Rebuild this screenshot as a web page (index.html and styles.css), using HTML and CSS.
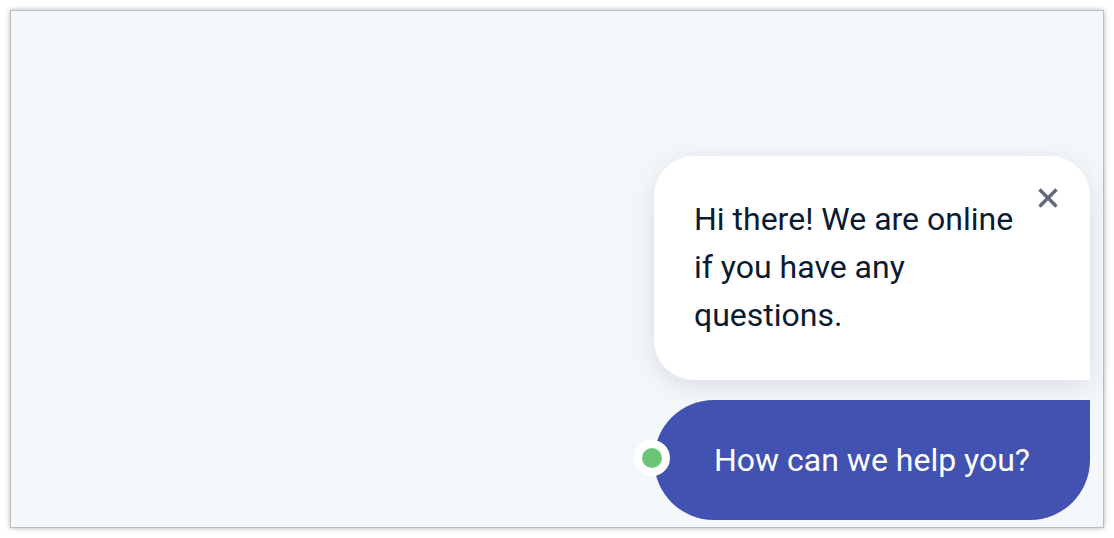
FILE: index.html
```html
<!DOCTYPE html>
<html lang="en">
<head>
<meta charset="utf-8">
<title>Chat widget</title>
<link rel="stylesheet" href="styles.css">
</head>
<body>
<div class="frame">
  <div class="widget">
    <div class="card">
      <p class="message">Hi there! We are online if you have any questions.</p>
      <button class="close" aria-label="Close">
        <svg width="22" height="22" viewBox="0 0 22 22"><path d="M2.5 2.5 L19.5 19.5 M19.5 2.5 L2.5 19.5" stroke="#5f6b78" stroke-width="3.4" stroke-linecap="butt"/></svg>
      </button>
    </div>
    <div class="launcher">
      <span class="status"></span>
      <span class="launcher-text">How can we help you?</span>
    </div>
  </div>
</div>
</body>
</html>
```
FILE: styles.css
```css
* { box-sizing: border-box; }
html, body { margin: 0; padding: 0; background: #ffffff; }
body { padding: 10px; font-family: Roboto, "Liberation Sans", sans-serif; }
.frame {
  width: 1094px;
  height: 518px;
  background: #f5f8fb;
  border: 1px solid #bdbdbd;
  box-shadow: 0 0 5px rgba(0,0,0,0.3);
  display: flex;
  flex-direction: column;
  justify-content: flex-end;
  align-items: flex-end;
  padding: 0 13px 7px 0;
}
.widget {
  display: flex;
  flex-direction: column;
  gap: 20px;
  width: 436px;
}
.card {
  position: relative;
  background: #ffffff;
  border-radius: 40px 40px 0 40px;
  padding: 39px 40px 40px 40px;
  box-shadow: 0 6px 28px rgba(30,40,60,0.13);
  height: 224px;
}
.message {
  margin: 0;
  max-width: 335px;
  font-size: 32px;
  line-height: 48px;
  color: #0b1a30;
}
.close {
  position: absolute;
  top: 31px;
  right: 31px;
  width: 22px;
  height: 22px;
  padding: 0;
  border: 0;
  background: transparent;
  display: block;
}
.close svg { display: block; }
.launcher {
  position: relative;
  height: 120px;
  background: #4152b0;
  border-radius: 60px 0 60px 60px;
  display: flex;
  align-items: center;
  justify-content: center;
}
.launcher-text {
  color: #ffffff;
  font-size: 32px;
  line-height: 40px;
}
.status {
  position: absolute;
  left: -20px;
  top: 40px;
  width: 36px;
  height: 36px;
  border-radius: 50%;
  background: #6cc476;
  border: 8px solid #ffffff;
}
```
